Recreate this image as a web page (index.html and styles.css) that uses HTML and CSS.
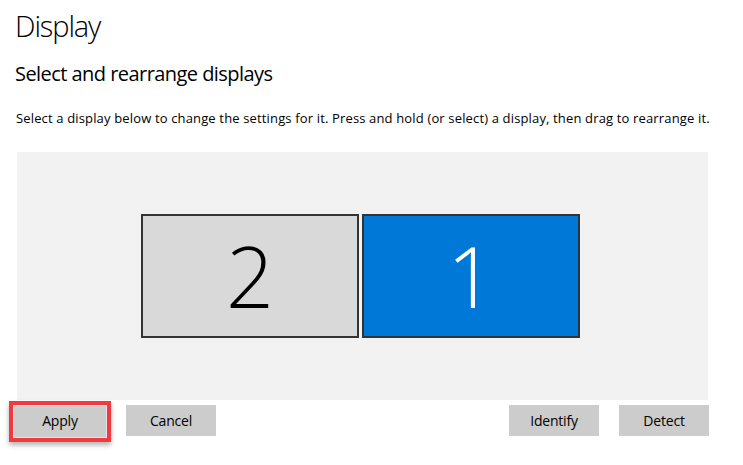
FILE: index.html
```html
<!DOCTYPE html>
<html lang="en">
<head>
<meta charset="utf-8">
<title>Display</title>
<link rel="stylesheet" href="styles.css">
</head>
<body>
<main class="page">
  <h1 class="title">Display</h1>
  <h2 class="subtitle">Select and rearrange displays</h2>
  <p class="desc">Select a display below to change the settings for it. Press and hold (or select) a display, then drag to rearrange it.</p>
  <div class="canvas">
    <div class="monitors">
      <div class="monitor monitor-idle">2</div>
      <div class="monitor monitor-active">1</div>
    </div>
  </div>
  <div class="actions">
    <div class="focus-ring"><button class="btn btn-inner">Apply</button></div>
    <button class="btn btn-cancel">Cancel</button>
    <div class="spacer"></div>
    <button class="btn">Identify</button>
    <button class="btn btn-detect">Detect</button>
  </div>
</main>
</body>
</html>
```
FILE: styles.css
```css
html, body {
  margin: 0;
  padding: 0;
  background: #ffffff;
}
body {
  font-family: "Open Sans", "Noto Sans", "Liberation Sans", sans-serif;
  color: #000;
  min-height: 465px;
}
.page {
  padding: 0 35px 29px 17px;
  width: 691px;
}
.title {
  margin: 8px 0 0 -2px;
  font-size: 29px;
  line-height: 36px;
  font-weight: 300;
  letter-spacing: -1.1px;
}
.subtitle {
  margin: 16px 0 0 -2px;
  font-size: 20px;
  line-height: 28px;
  font-weight: 400;
  letter-spacing: -0.55px;
}
.desc {
  margin: 21px 0 0 -1px;
  font-size: 13px;
  line-height: 18px;
  letter-spacing: 0.15px;
  white-space: nowrap;
}
.canvas {
  margin-top: 25px;
  height: 248px;
  background: #f2f2f2;
  display: flex;
  align-items: center;
  justify-content: center;
}
.monitors {
  display: flex;
  gap: 3px;
  margin-left: -4px;
}
.monitor {
  width: 214px;
  height: 120px;
  border: 2px solid #333333;
  display: flex;
  align-items: center;
  justify-content: center;
  font-size: 84px;
  font-weight: 300;
  line-height: 1;
}
.monitor-idle {
  background: #d9d9d9;
  color: #000;
}
.monitor-active {
  background: #0078d7;
  color: #fff;
}
.actions {
  margin-top: 5px;
  margin-right: -1px;
  display: flex;
  align-items: center;
  height: 31px;
}
.spacer {
  flex: 1;
}
.btn {
  box-sizing: border-box;
  font-family: inherit;
  font-size: 14px;
  width: 90px;
  height: 31px;
  border: none;
  background: #cccccc;
  color: #000;
  padding: 0;
  margin: 0;
  letter-spacing: -0.2px;
  display: block;
}
.focus-ring {
  box-sizing: border-box;
  flex-shrink: 0;
  width: 102px;
  height: 41px;
  margin-left: -8px;
  margin-top: 1px;
  border: 4px solid #f03a3f;
  padding: 1px;
  background: #e4e4e4;
  box-shadow: 0 3px 5px rgba(0, 0, 0, 0.3);
}
.btn-inner {
  width: 100%;
  height: 100%;
  padding-bottom: 1px;
}
.btn-cancel {
  margin-left: 15px;
}
.btn-detect {
  margin-left: 20px;
}
```
